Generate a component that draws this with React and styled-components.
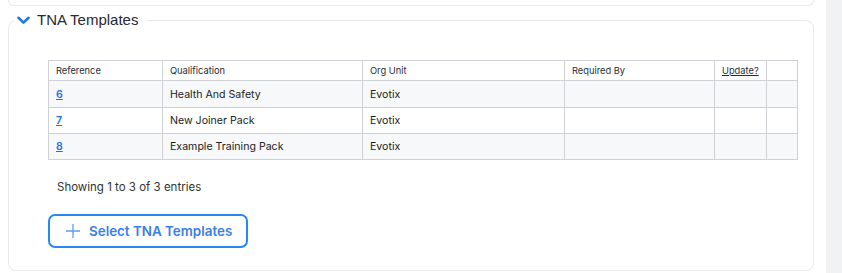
import React from "react";
import styled, { createGlobalStyle } from "styled-components";

const GlobalStyle = createGlobalStyle`
  html, body { margin: 0; padding: 0; background: #ffffff; }
  body { font-family: Inter, "Noto Sans", sans-serif; color: #222; }
  *, *::before, *::after { box-sizing: border-box; }
`;

const Page = styled.div`
  display: flex;
  min-height: 273px;
`;

const Main = styled.div`
  flex: 1;
  min-width: 0;
  padding: 0 12px 0 8px;
`;

const ScrollStrip = styled.div`
  width: 16px;
  flex: none;
  background: #f1f2f4;
`;

const TopCard = styled.div`
  height: 6px;
  border: 1px solid #e7e9ec;
  border-top: none;
  border-radius: 0 0 8px 8px;
`;

const Fieldset = styled.fieldset`
  margin: 4px 0 0;
  border: 1px solid #e7e9ec;
  border-radius: 8px;
  padding: 0 16px 22px 39px;
  min-width: 0;
`;

const Legend = styled.legend`
  display: flex;
  align-items: center;
  gap: 7px;
  margin-left: -34px;
  padding: 0 8px 0 3px;
  font-family: "Liberation Sans", Arial, sans-serif;
  font-size: 15px;
  line-height: 20px;
  color: #262a33;
`;

const Table = styled.table`
  margin-top: 30px;
  width: 100%;
  border-collapse: collapse;
  table-layout: fixed;
  font-size: 10.6px;
  border: 1px solid #cfd1d7;
`;

const Th = styled.th`
  height: 20px;
  padding: 0 7px;
  text-align: left;
  font-weight: 400;
  font-size: 9.3px;
  color: #2a2d35;
  border: 1px solid #cfd1d7;
  width: ${(p) => p.$w}px;
`;

const Row = styled.tr`
  background: ${(p) => (p.$striped ? "#f7f8fa" : "#ffffff")};
`;

const Td = styled.td`
  height: ${(p) => (p.$first ? 27 : 26)}px;
  padding: 0 7px;
  border: 1px solid #cfd1d7;
  color: #222;
`;

const RefLink = styled.a`
  color: #1a73e8;
  font-weight: 600;
  text-decoration: underline;
  cursor: pointer;
`;

const HeadLink = styled.a`
  color: #2a2d35;
  text-decoration: underline;
  cursor: pointer;
`;

const Info = styled.div`
  margin-top: 19px;
  padding-left: 9px;
  font-size: 11.5px;
  line-height: 16px;
  color: #333;
`;

const AddButton = styled.button`
  margin-top: 19px;
  width: 200px;
  height: 34px;
  display: flex;
  align-items: center;
  gap: 8px;
  padding: 0 0 0 15px;
  background: #fff;
  border: 2px solid #2589f5;
  border-radius: 7px;
  font-family: Inter, sans-serif;
  font-size: 13.4px;
  font-weight: 600;
  color: #3a80e6;
  cursor: pointer;
`;

const columns = [
  { key: "ref", label: "Reference", w: 114 },
  { key: "qual", label: "Qualification", w: 200 },
  { key: "org", label: "Org Unit", w: 202 },
  { key: "req", label: "Required By", w: 150 },
  { key: "upd", label: "Update?", w: 52, link: true },
  { key: "x", label: "", w: 31 },
];

const rows = [
  { ref: "6", qual: "Health And Safety", org: "Evotix" },
  { ref: "7", qual: "New Joiner Pack", org: "Evotix" },
  { ref: "8", qual: "Example Training Pack", org: "Evotix" },
];

export default function App() {
  return (
    <>
      <GlobalStyle />
      <Page>
        <Main>
          <TopCard />
          <Fieldset>
            <Legend>
              <svg width="13" height="9" viewBox="0 0 13 9">
                <path d="M1.5 1.8 L6.5 6.6 L11.5 1.8" fill="none" stroke="#1f7ae0" strokeWidth="2.6" strokeLinecap="round" strokeLinejoin="round" />
              </svg>
              TNA Templates
            </Legend>
            <Table>
              <thead>
                <tr>
                  {columns.map((c) => (
                    <Th key={c.key} $w={c.w}>
                      {c.link ? <HeadLink>{c.label}</HeadLink> : c.label}
                    </Th>
                  ))}
                </tr>
              </thead>
              <tbody>
                {rows.map((r, i) => (
                  <Row key={r.ref} $striped={i % 2 === 0}>
                    <Td $first={i === 0}><RefLink>{r.ref}</RefLink></Td>
                    <Td $first={i === 0}>{r.qual}</Td>
                    <Td $first={i === 0}>{r.org}</Td>
                    <Td $first={i === 0} />
                    <Td $first={i === 0} />
                    <Td $first={i === 0} />
                  </Row>
                ))}
              </tbody>
            </Table>
            <Info>Showing 1 to 3 of 3 entries</Info>
            <AddButton>
              <svg width="16" height="16" viewBox="0 0 16 16">
                <path d="M8 1 V15 M1 8 H15" stroke="#5c9cee" strokeWidth="1.3" fill="none" />
              </svg>
              Select TNA Templates
            </AddButton>
          </Fieldset>
        </Main>
        <ScrollStrip />
      </Page>
    </>
  );
}
